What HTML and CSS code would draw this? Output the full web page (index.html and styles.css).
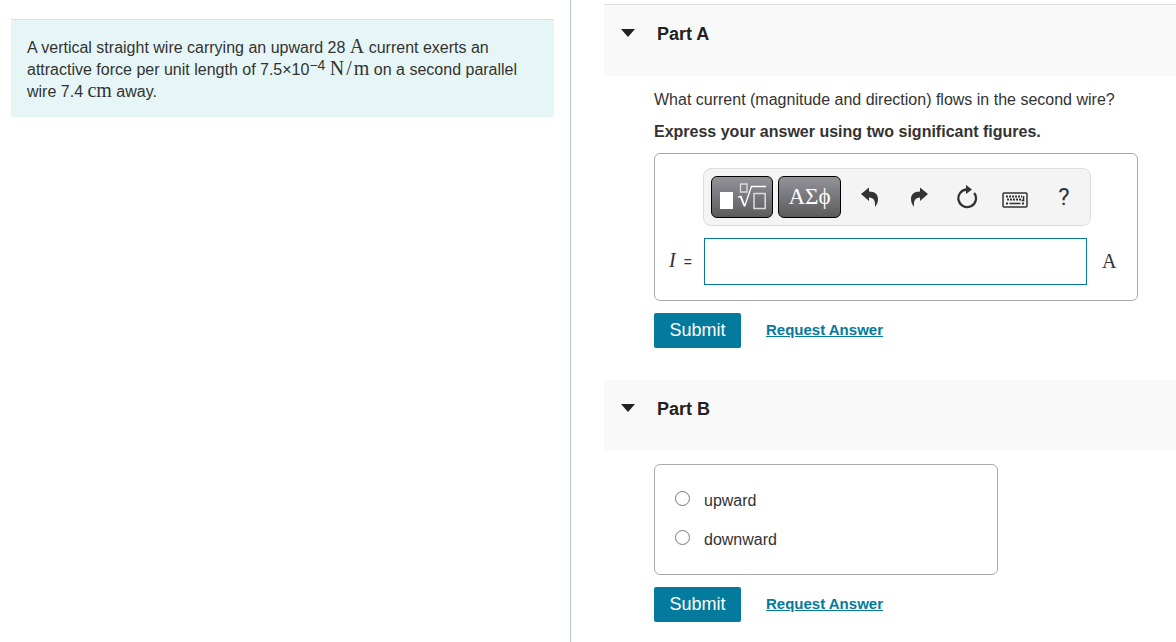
FILE: index.html
```html
<!DOCTYPE html>
<html lang="en">
<head>
<meta charset="utf-8">
<meta name="viewport" content="width=device-width, initial-scale=1">
<title>Parallel wires</title>
<link rel="stylesheet" href="styles.css">
</head>
<body>
<div class="layout">
  <aside class="problem">
    <p class="statement">A vertical straight wire carrying an upward 28 <span class="unit">A</span> current exerts an attractive force per unit length of 7.5×10<sup>−4</sup> <span class="unit">N<span class="slash">/</span>m</span> on a second parallel wire 7.4 <span class="unit">cm</span> away.</p>
  </aside>
  <main class="parts">
    <section class="part">
      <header class="part-header part-header-first">
        <svg class="caret" viewBox="0 0 14 8" aria-hidden="true"><path d="M0 0h14L7 8z"/></svg>
        <h2 class="part-title">Part A</h2>
      </header>
      <div class="part-body">
        <p class="question">What current (magnitude and direction) flows in the second wire?</p>
        <p class="hint">Express your answer using two significant figures.</p>
        <form class="answer-box">
          <div class="toolbar">
            <button type="button" class="palette" aria-label="Templates">
              <svg width="48" height="30" viewBox="0 0 48 30" fill="none" stroke="#fff" aria-hidden="true">
                <path d="M2 10h13v17H2z" fill="#fff" stroke="none"/>
                <path d="M22.500 2h6.500v8h-6.500z" stroke="#ddd" stroke-width="1.300"/>
                <path d="M20 15.500l2.500-1.500" stroke-width="1.200"/>
                <path d="M22.500 14l4 10" stroke-width="2"/>
                <path d="M26.500 24.500l7-20h15" stroke-width="1.300"/>
                <path d="M36 11.500h11.200v15H36z" stroke="#ddd" stroke-width="1.500"/>
              </svg>
            </button>
            <button type="button" class="palette palette-greek">ΑΣϕ</button>
            <div class="tools">
              <button type="button" class="tool" aria-label="Undo"><svg width="18" height="20" viewBox="0 0 18 20" aria-hidden="true"><path d="M0 7L8 0.500v4C14.500 4.500 17 8 17 12c0 3-1 5.500-3 8C14.500 14 13 10.500 8 10.500V14z"/></svg></button>
              <button type="button" class="tool" aria-label="Redo"><svg width="18" height="20" viewBox="0 0 18 20" aria-hidden="true"><path d="M18 7L10 0.500v4C3.500 4.500 1 8 1 12c0 3 1 5.500 3 8C3.500 14 5 10.500 10 10.500V14z"/></svg></button>
              <button type="button" class="tool" aria-label="Reset"><svg width="22" height="24" viewBox="0 0 22 24" aria-hidden="true"><path d="M13 4.500H11A8.800 8.800 0 1 0 18.200 8" fill="none" stroke="#333" stroke-width="2.300"/><path d="M10 0l6 4.500-6 4.500z"/></svg></button>
              <button type="button" class="tool tool-keyboard" aria-label="Keyboard"><svg width="26" height="16" viewBox="0 0 26 16" fill="none" stroke="#333" aria-hidden="true"><rect x="1" y="1" width="24" height="14" rx="1" stroke-width="1.500"/><path d="M4 4.500h16M5 7.500h14M4 11.500h2M20 11.500h2" stroke-width="2" stroke-dasharray="2 1"/><path d="M7.500 11.500h11M21.500 4v4.500h-2" stroke-width="1.600"/></svg></button>
              <button type="button" class="tool tool-help" aria-label="Help">?</button>
            </div>
          </div>
          <label class="variable" for="current"><i class="symbol">I</i> =</label>
          <input class="answer" id="current" type="text">
          <span class="answer-unit">A</span>
        </form>
        <div class="actions">
          <button type="button" class="submit">Submit</button>
          <a class="request" href="#">Request Answer</a>
        </div>
      </div>
    </section>
    <section class="part">
      <header class="part-header">
        <svg class="caret" viewBox="0 0 14 8" aria-hidden="true"><path d="M0 0h14L7 8z"/></svg>
        <h2 class="part-title">Part B</h2>
      </header>
      <div class="part-body">
        <form class="choices">
          <label class="choice"><input class="radio" type="radio" name="direction"><span>upward</span></label>
          <label class="choice"><input class="radio" type="radio" name="direction"><span>downward</span></label>
        </form>
        <div class="actions">
          <button type="button" class="submit">Submit</button>
          <a class="request" href="#">Request Answer</a>
        </div>
      </div>
    </section>
  </main>
</div>
</body>
</html>
```
FILE: styles.css
```css
* { box-sizing: border-box; }

body {
  margin: 0;
  background: #fff;
  color: #333;
  font: 16px/22px "Liberation Sans", Arial, sans-serif;
}

p, h2 { margin: 0; }
button { font-family: inherit; cursor: pointer; }

.layout {
  display: grid;
  grid-template-columns: minmax(0, 571fr) minmax(0, 605fr);
  min-height: 100vh;
}

.problem {
  padding: 19px 16px 16px 11px;
  border-right: 1px solid #b7cbdc;
}

.statement {
  padding: 17px 16px 14px;
  border-top: 1px solid #d9dfde;
  background: #e6f6f6;
}

.statement sup {
  font-size: 14px;
  line-height: 0;
  vertical-align: 5px;
}

.unit {
  font-family: "Liberation Serif", "Times New Roman", serif;
  font-size: 20px;
  line-height: 0;
}

.slash { padding: 0 2px; }

.parts { padding: 4px 0 0 33px; }

.part-header {
  display: flex;
  gap: 22px;
  min-height: 71px;
  padding: 17px 17px 0;
  background: #f9f9f9;
}

.part-header-first {
  min-height: 72px;
  border-top: 1px solid #ddd;
}

.caret {
  width: 14px;
  height: 8px;
  margin-top: 7px;
  fill: #222;
}

.part-title {
  color: #222;
  font-size: 18px;
  line-height: 24px;
}

.part-body { padding: 13px 38px 32px 50px; }

.question { margin-bottom: 10px; }
.hint { margin-bottom: 10px; font-weight: bold; }

.answer-box {
  display: grid;
  grid-template-columns: 34px minmax(0, 1fr) 34px;
  row-gap: 12px;
  column-gap: 1px;
  align-items: center;
  padding: 14px 15px 15px 14px;
  border: 1px solid #aaa;
  border-radius: 6px;
}

.toolbar {
  grid-column: 2;
  display: flex;
  align-items: center;
  gap: 5px;
  height: 58px;
  margin-right: -4px;
  margin-left: -1px;
  padding: 0 2px 0 7px;
  border: 1px solid #ddd;
  border-radius: 8px;
  background: #f4f4f4;
}

.palette {
  display: flex;
  flex: none;
  align-items: center;
  justify-content: center;
  width: 62px;
  height: 42px;
  padding: 0;
  border: 1px solid #000;
  border-radius: 6px;
  background: linear-gradient(#93929a, #5c5c5c);
  color: #fff;
  font: 23px/1 "Liberation Serif", "Times New Roman", serif;
}

.palette-greek {
  width: 63px;
  padding-bottom: 2px;
}

.tools {
  display: flex;
  flex: 1;
  min-width: 0;
}

.tool {
  display: flex;
  flex: 1;
  align-items: center;
  justify-content: center;
  min-width: 0;
  height: 42px;
  padding: 0;
  border: 0;
  background: none;
  color: #333;
  fill: #333;
}

.tool-keyboard { padding-top: 6px; }
.tool-help { font: 24px/1 Roboto, sans-serif; }

.variable {
  grid-column: 1;
  display: flex;
  align-items: baseline;
  gap: 8px;
  padding-bottom: 2px;
  font-size: 14px;
}

.symbol, .answer-unit {
  font-family: "Liberation Serif", "Times New Roman", serif;
  font-size: 20px;
}

.answer {
  width: 100%;
  height: 47px;
  padding: 8px;
  border: 1px solid #047a9c;
  background: #fff;
  font: inherit;
}

.answer:focus { outline: 1px solid #047a9c; }
.answer-unit { padding: 0 0 2px 14px; }

.actions {
  display: flex;
  align-items: center;
  gap: 25px;
  margin-top: 12px;
}

.submit {
  width: 87px;
  height: 35px;
  padding: 0 0 2px;
  border: 0;
  border-radius: 2px;
  background: #047a9c;
  color: #fff;
  font-size: 18px;
  line-height: 24px;
}

.request {
  padding-bottom: 2px;
  color: #047a9c;
  font-size: 15px;
  font-weight: bold;
}

.choices {
  display: flex;
  flex-direction: column;
  gap: 17px;
  max-width: 344px;
  padding: 25px 20px 23px;
  border: 1px solid #aaa;
  border-radius: 6px;
}

.choice {
  display: flex;
  gap: 14px;
}

.radio {
  width: 15px;
  height: 15px;
  margin: 1px 0 0;
}
```
